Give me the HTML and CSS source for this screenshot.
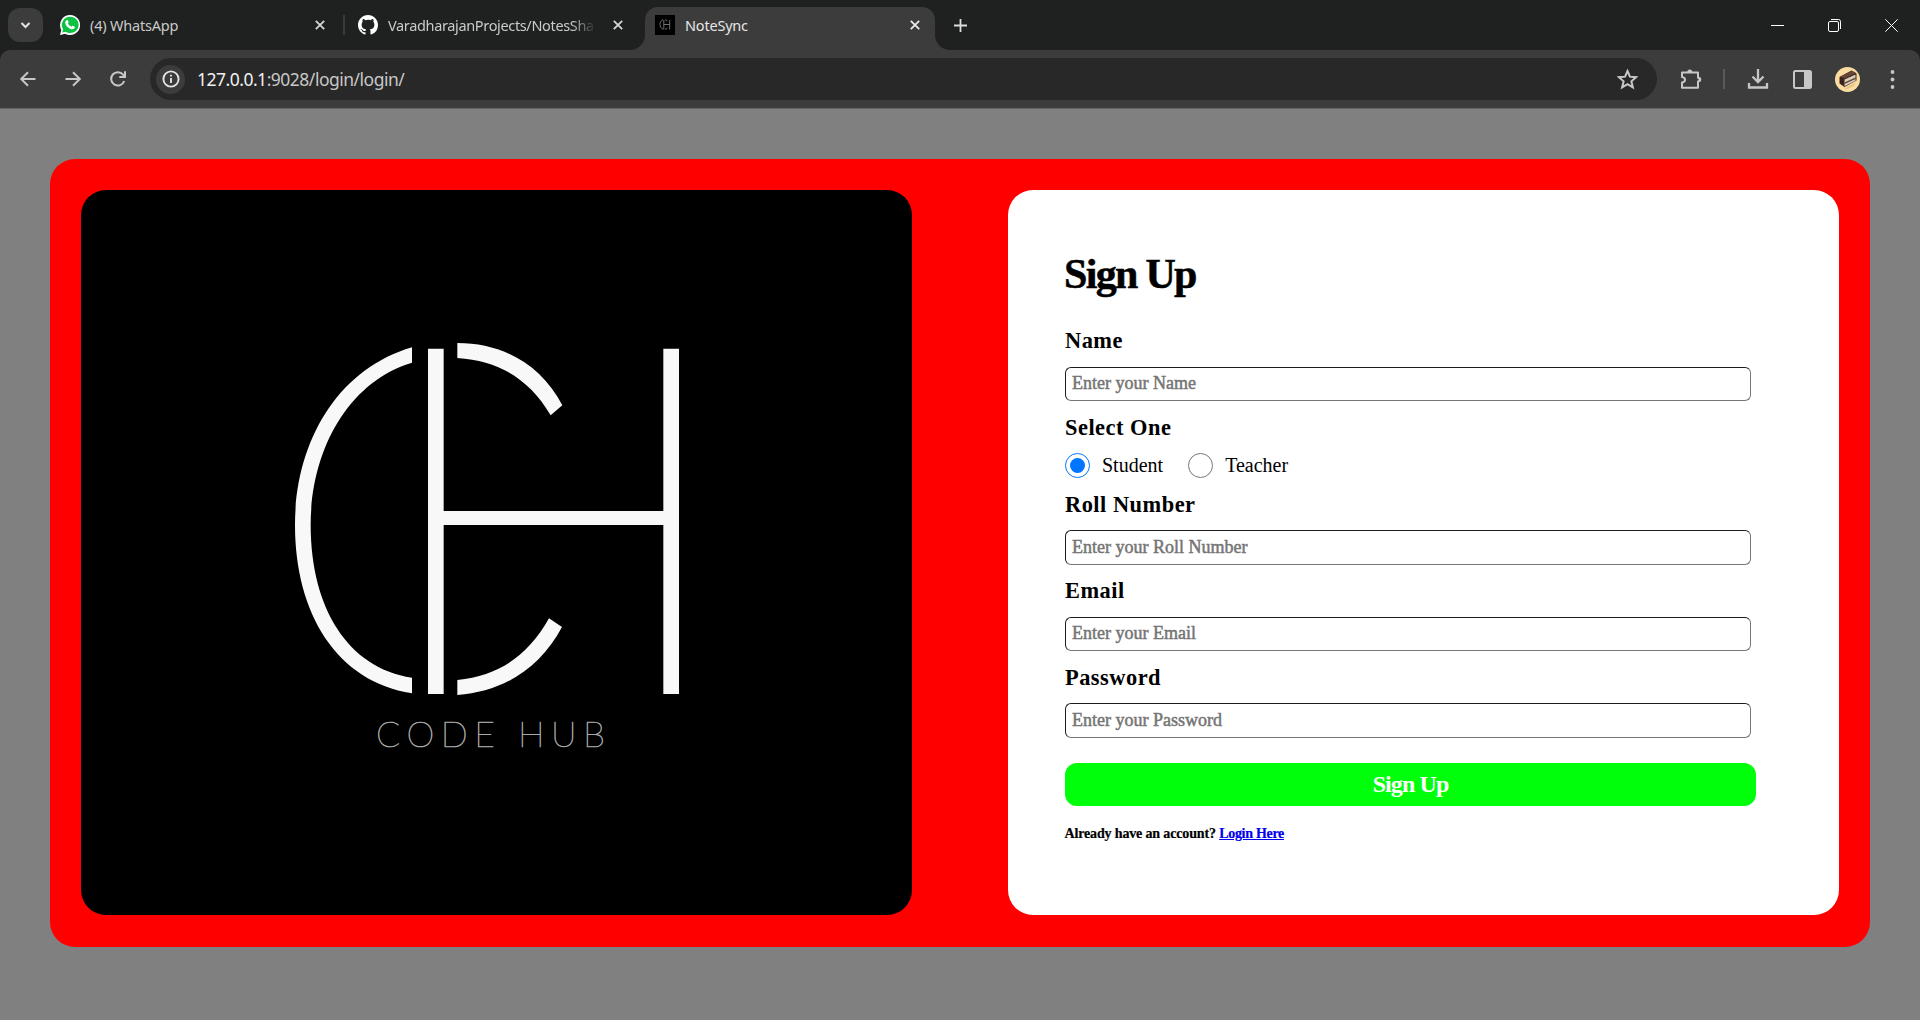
FILE: index.html
```html
<!DOCTYPE html>
<html lang="en">
<head>
<meta charset="utf-8">
<title>NoteSync</title>
<link rel="stylesheet" href="styles.css">
</head>
<body>
<div class="browser">
  <header class="tabstrip">
    <div class="tab-search"><svg width="35" height="34" viewBox="0 0 35 34"><path d="M13.5 15l4 4 4-4" fill="none" stroke="#e3e3e3" stroke-width="2"/></svg></div>
    <div class="tab tab-whatsapp">
      <svg class="favicon" viewBox="0 0 20 20"><path d="M10 0a10 10 0 0 0-8.7 14.9L0 20l5.2-1.3A10 10 0 1 0 10 0z" fill="#fff"/><path d="M10.100 1.700a8.200 8.200 0 0 0-7 12.500L2.300 17.600l3.500-.9A8.200 8.200 0 1 0 10.100 1.700z" fill="#0fc143"/><path d="M6.600 5.300c.5-.4 1.100-.3 1.300.2l.7 1.600c.2.500-.7 1.100-.6 1.500.7 1.400 1.700 2.400 3.300 3 .4.100 1-1 1.400-.9l1.800.9c.5.200.3 1.300-.2 1.900-.9.900-2.300 1-3.700.5-2.700-1-4.600-3-5.300-5.400-.3-1.400.3-2.600 1.300-3.300z" fill="#fff"/></svg>
      <span class="tab-title">(4) WhatsApp</span>
      <svg class="close" viewBox="0 0 10 10"><path d="M.8.8l8.400 8.400M9.200.8L.8 9.200"/></svg>
    </div>
    <div class="tab-divider"></div>
    <div class="tab tab-github">
      <svg class="favicon" viewBox="0 0 16 16"><path fill="#fff" d="M8 0C3.580 0 0 3.580 0 8c0 3.540 2.290 6.530 5.470 7.590.4.070.55-.17.55-.38 0-.19-.01-.82-.01-1.490-2.010.37-2.530-.49-2.690-.94-.09-.23-.48-.94-.82-1.130-.28-.15-.68-.52-.01-.53.63-.01 1.080.58 1.230.82.72 1.210 1.870.87 2.330.66.07-.52.28-.87.51-1.070-1.780-.2-3.640-.89-3.640-3.950 0-.87.31-1.590.82-2.150-.08-.2-.36-1.020.08-2.120 0 0 .67-.21 2.200.82A7.600 7.600 0 0 1 8 3.860c.68 0 1.360.09 2 .27 1.530-1.040 2.200-.82 2.200-.82.44 1.100.16 1.920.08 2.120.51.56.82 1.270.82 2.150 0 3.070-1.870 3.750-3.650 3.950.29.25.54.73.54 1.480 0 1.070-.01 1.930-.01 2.200 0 .21.15.46.55.38A8.010 8.010 0 0 0 16 8c0-4.420-3.580-8-8-8z"/></svg>
      <span class="tab-title faded">VaradharajanProjects/NotesSha</span>
      <svg class="close" viewBox="0 0 10 10"><path d="M.8.8l8.400 8.400M9.200.8L.8 9.200"/></svg>
    </div>
    <div class="tab tab-active">
      <svg class="favicon" viewBox="0 0 20 20"><path d="M0 0h20v20H0z"/><path d="M8 4.800C4 5.800 4 13 8 14.200M8.800 5v9.500M10 4.800q2 .2 2.500 1.500M10 14.300q2-.2 2.500-1.500M9 9.500h5.700M14.700 5v9.500" fill="none" stroke="#8b8b8b" stroke-width=".8"/></svg>
      <span class="tab-title">NoteSync</span>
      <svg class="close" viewBox="0 0 10 10"><path d="M.8.8l8.400 8.400M9.200.8L.8 9.200"/></svg>
    </div>
    <svg class="new-tab" viewBox="0 0 13 13"><path d="M6.500 0v13M0 6.500h13" stroke="#dcdcdc" stroke-width="1.800"/></svg>
    <div class="window-buttons">
      <svg viewBox="0 0 13 13"><path d="M0 6.500h13" /></svg>
      <svg viewBox="0 0 13 13"><rect x=".5" y="2.500" width="10" height="10" rx="1.500"/><path d="M3 .5h7.500a2 2 0 0 1 2 2V10"/></svg>
      <svg viewBox="0 0 13 13"><path d="M.3.3l12.400 12.400M12.700.3L.3 12.700"/></svg>
    </div>
  </header>

  <nav class="toolbar">
    <svg class="nav-icon" viewBox="0 0 20 20"><path d="M17.500 10H3.800M10 3.200L3.200 10l6.800 6.800"/></svg>
    <svg class="nav-icon" viewBox="0 0 20 20"><path d="M2.500 10h13.700M10 3.200l6.800 6.800-6.800 6.800"/></svg>
    <svg class="nav-icon" viewBox="0 0 20 20"><path d="M16.200 12a6.700 6.700 0 1 1-1.100-6.300l1.500 1.800M17 2.300v5.700h-5.700"/></svg>
    <div class="omnibox">
      <span class="site-info"><svg viewBox="0 0 18 18"><circle cx="9" cy="9" r="7.600"/><path d="M9 8v5M9 4.800v1.800"/></svg></span>
      <span class="url"><b>127.0.0.1</b>:9028/login/login/</span>
      <svg class="star" viewBox="0 0 20 20"><path d="M10 1.900l2.300 5.400 5.900.5-4.500 3.900 1.400 5.800L10 14.400l-5.100 3.100 1.400-5.800-4.500-3.900 5.900-.5z"/></svg>
    </div>
    <div class="actions">
      <svg class="puzzle" viewBox="0 0 22 22"><path d="M2 4.500h16v5.200q2.300.2 2.300 1.900T18 13.500v6.300H2v-5.200q3-.6 3-2.900t-3-2.700z" fill="none" stroke="#c7c7c7" stroke-width="2" stroke-linejoin="round"/><path d="M7.300 4a2.500 2.500 0 0 1 5 0zM18.500 9a2.500 2.500 0 0 1 0 5z" fill="#c7c7c7"/></svg>
      <span class="bar"></span>
      <svg class="download" viewBox="0 0 22 22"><path d="M11 1v12.500M5.500 8.500L11 14l5.500-5.500M2 15v4.500h18V15" fill="none" stroke="#c7c7c7" stroke-width="2.300"/></svg>
      <svg class="panel" viewBox="0 0 19 19"><rect x="1" y="1" width="17" height="17" rx="1.500" fill="none" stroke="#c7c7c7" stroke-width="2"/><path d="M11 1h7v17h-7z" fill="#c7c7c7"/></svg>
      <svg class="avatar" viewBox="0 0 25 25"><circle cx="12.500" cy="12.500" r="12.500" fill="#fbdda0"/><path d="M4.500 10l12-6.500 5 3v7l-12 6.500-5-3.500z" fill="#3a211c"/><path d="M9.500 12.500l11-5v6.200l-11 5.500z" fill="#d8cdb9"/><path d="M9.500 15.500l11-5v1.500l-11 5z" fill="#5d4336"/><path d="M5 9.800l12-6 4 2.200-11.500 5.600z" fill="#68453a"/><path d="M5 18l5 3 11-5.500-2 3.500-8 3.500z" fill="#e9c58a"/></svg>
      <svg class="dots" viewBox="0 0 5 19"><circle cx="2.500" cy="2" r="1.900"/><circle cx="2.500" cy="9.500" r="1.900"/><circle cx="2.500" cy="17" r="1.900"/></svg>
    </div>
  </nav>

  <main class="page">
    <div class="container">
      <section class="brand">
        <svg viewBox="81 190 831 725">
          <g transform="translate(270 320) scale(.33333)" fill="#f8f8f8">
            <path d="M426 82C200 148 75 370 75 615C75 880 200 1085 426 1120V1073C235 1045 122 865 122 615C122 390 235 185 426 128z"/>
            <path d="M562 69C700 69 815 135 877 256L842 286C780 180 690 122 562 114z"/>
            <path d="M562 1125C700 1115 810 1045 876 921L837 895C775 1005 690 1067 562 1080z"/>
            <path d="M474 86h47v487h659V86h47v1036h-47V615H521v507h-47z"/>
          </g>
          <text class="brand-name" x="376" y="746.500" textLength="229">CODE HUB</text>
        </svg>
      </section>
      <section class="card">
        <h1 class="title">Sign Up</h1>
        <form class="form">
          <div class="field"><label for="name">Name</label><input id="name" type="text" placeholder="Enter your Name"></div>
          <div class="field">
            <span class="label">Select One</span>
            <div class="roles">
              <label class="role"><input type="radio" name="role" checked><span>Student</span></label>
              <label class="role"><input type="radio" name="role"><span>Teacher</span></label>
            </div>
          </div>
          <div class="field"><label for="roll">Roll Number</label><input id="roll" type="text" placeholder="Enter your Roll Number"></div>
          <div class="field"><label for="email">Email</label><input id="email" type="email" placeholder="Enter your Email"></div>
          <div class="field"><label for="password">Password</label><input id="password" type="password" placeholder="Enter your Password"></div>
          <button class="submit" type="button">Sign Up</button>
        </form>
        <p class="switch">Already have an account? <a href="#">Login Here</a></p>
      </section>
    </div>
  </main>
</div>
</body>
</html>
```
FILE: styles.css
```css
* { box-sizing: border-box; }
body { margin: 0; background: #808080; font-family: "Liberation Serif", serif; color: #000; overflow: hidden; }
svg { display: block; flex: none; }
.browser { display: flex; flex-direction: column; width: 1920px; height: 1020px; background: #1f2120; }

/* Tab strip */
.tabstrip { display: flex; align-items: center; height: 50px; padding-left: 8px; font: 14.5px/20px "Noto Sans", sans-serif; color: #c9cac9; }
.tab-search { width: 35px; height: 34px; border-radius: 12px; background: #3c3c3c; }
.tab { display: flex; align-items: center; height: 42px; }
.tab-whatsapp { width: 282px; padding-left: 17px; }
.tab-github { width: 281px; padding-left: 13px; }
.tab-divider { width: 2px; height: 20px; margin-left: 18px; background: #3a3c3b; }
.favicon { width: 20px; height: 20px; }
.tab-title { flex: 1; margin-left: 10px; white-space: nowrap; letter-spacing: -.2px; }
.faded { flex: none; width: 208px; margin-right: 17px; letter-spacing: -.35px; -webkit-mask-image: linear-gradient(90deg, #000 88%, transparent); mask-image: linear-gradient(90deg, #000 88%, transparent); }
.close { width: 10px; height: 10px; }
.close path { stroke: #d5d5d5; stroke-width: 1.8; }
.tab-active { position: relative; width: 290px; height: 43px; margin: 7px 0 0 19px; padding: 0 15px 8px 10px; border-radius: 13px 13px 0 0; background: #3c3c3c; color: #e6e6e6; }
.tab-active::before, .tab-active::after { content: ""; position: absolute; bottom: 0; width: 15px; height: 15px; }
.tab-active::before { left: -15px; background: radial-gradient(circle at 0 0, transparent 14.5px, #3c3c3c 15.5px); }
.tab-active::after { right: -15px; background: radial-gradient(circle at 100% 0, transparent 14.5px, #3c3c3c 15.5px); }
.tab-active .close path { stroke: #ececec; }
.new-tab { width: 13px; height: 13px; margin-left: 19px; }
.window-buttons { display: flex; gap: 44px; margin: 0 22px 0 auto; }
.window-buttons svg { width: 13px; height: 13px; fill: none; stroke: #fff; stroke-width: 1; }

/* Toolbar */
.toolbar { display: flex; align-items: center; height: 59px; padding-left: 17.5px; background: #3c3c3c; border-bottom: 1px solid #666; border-radius: 10px 10px 0 0; }
.nav-icon { width: 20px; height: 20px; margin-right: 25px; fill: none; stroke: #c7c7c7; stroke-width: 2; }
.nav-icon:nth-of-type(3) { margin-right: 22.5px; }
.omnibox { display: flex; align-items: center; width: 1507px; height: 42px; padding: 0 19px 0 6px; border-radius: 21px; background: #282828; }
.site-info { display: flex; align-items: center; justify-content: center; width: 29px; height: 29px; border-radius: 50%; background: #3c3c3c; }
.site-info svg { width: 18px; height: 18px; fill: none; stroke: #e3e3e3; stroke-width: 1.9; }
.url { margin-left: 12px; font: 17.5px/24px "Noto Sans", sans-serif; letter-spacing: -.5px; color: #c7c7c7; }
.url b { font-weight: 400; color: #f0f0f0; }
.star { width: 21px; height: 21px; margin-left: auto; fill: none; stroke: #c7c7c7; stroke-width: 1.9; }
.actions { display: flex; align-items: center; flex: 1; }
.puzzle { width: 22px; height: 22px; margin-left: 23px; }
.bar { width: 2px; height: 20px; margin-left: 21px; background: #5a5a5a; }
.download { width: 22px; height: 22px; margin-left: 21.5px; }
.panel { width: 19px; height: 19px; margin-left: 24px; }
.avatar { width: 25px; height: 25px; margin-left: 23px; }
.dots { width: 5px; height: 19px; margin-left: 30px; fill: #c7c7c7; }

/* Page */
.page { flex: 1; padding: 50px; background: #808080; }
.container { display: flex; justify-content: space-between; height: 788px; padding: 31px 31px 32px; border-radius: 25px; background: #f00; }
.brand, .card { width: 831px; border-radius: 25px; overflow: hidden; }
.brand { background: #000; }
.brand-name { font: 100 35.500px Lato, sans-serif; fill: #a8a8a8; stroke: #a8a8a8; stroke-width: .7px; }
.card { padding: 59px 83px 0 57px; background: #fff; }
.title { margin: 0 0 29px -1px; font-size: 42px; line-height: 50px; letter-spacing: -1.7px; -webkit-text-stroke: .5px #000; }
.form { display: flex; flex-direction: column; }
.field { display: flex; flex-direction: column; gap: 12.5px; margin-bottom: 13.5px; }
.field > label, .label { font-size: 22.400px; font-weight: 700; line-height: 26px; letter-spacing: .5px; }
.field > input { width: 686px; height: 34.5px; padding: 0 6px; border: 1px solid; border-color: #1b1b1d #767676 #767676 #1b1b1d; border-radius: 6px; font: 18px "Liberation Serif", serif; }
.field > input::placeholder { color: #757575; -webkit-text-stroke: .5px #757575; }
.roles { display: flex; gap: 25px; height: 25px; }
.role { display: flex; align-items: center; gap: 12px; font-size: 20px; }
.role input { width: 25px; height: 25px; margin: 0; }
.submit { width: 691px; height: 43px; margin-top: 11.5px; padding: 0; border: 0; border-radius: 12px; background: #00ff0a; color: #fff; font: 700 24px "Liberation Serif", serif; letter-spacing: -.9px; }
.switch { margin: 18px 0 0 -.5px; font-size: 14px; font-weight: 700; line-height: 20px; letter-spacing: -.15px; -webkit-text-stroke: .2px; }
.switch a { color: #00e; letter-spacing: -.3px; }
```
